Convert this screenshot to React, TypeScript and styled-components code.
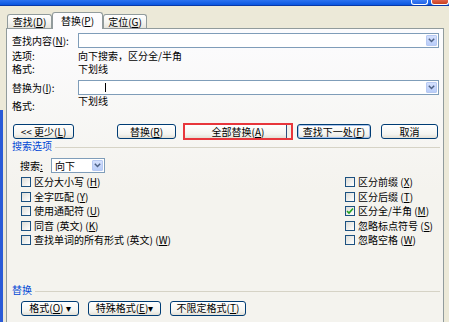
import React from 'react';
import styled, { createGlobalStyle } from 'styled-components';

const Global = createGlobalStyle`
  html, body { margin: 0; padding: 0; }
  body {
    width: 449px; height: 322px; overflow: hidden;
    background: #ECE9D8;
    font-family: "Noto Sans CJK SC", "Noto Sans", sans-serif;
    font-size: 10px; color: #000;
  }
  u { text-decoration: underline; text-underline-offset: 1px; }
`;

const Window = styled.div`
  width: 449px; height: 322px; overflow: hidden;
  display: flex; flex-direction: column;
  background:
    linear-gradient(to bottom, transparent 110px, #2A5BD7 110px) left top / 3px 100% no-repeat,
    #ECE9D8;
`;

const TitleBar = styled.div`
  height: 5px; flex: none;
  background: linear-gradient(#2C72F0, #0A56E0);
  border-bottom: 1px solid #0839A8;
  display: flex; justify-content: flex-end; gap: 3px;
`;

const TitleButton = styled.div<{ $close?: boolean }>`
  width: ${p => (p.$close ? 16 : 15)}px;
  border: 1px solid #fff; border-top: none;
  border-radius: 0 0 3px 3px;
  background: ${p => (p.$close ? 'linear-gradient(#E2624A, #C8401F)' : 'linear-gradient(#3E80F6, #2263E6)')};
`;

const TabRow = styled.div`
  height: 22px; flex: none;
  display: flex; align-items: flex-end;
  padding-left: 7px;
  position: relative; z-index: 1;
`;

const Tab = styled.div<{ $active?: boolean; $w: number }>`
  width: ${p => p.$w}px;
  height: ${p => (p.$active ? 17 : 14)}px;
  margin-bottom: ${p => (p.$active ? -1 : 0)}px;
  box-sizing: border-box;
  border: 1px solid #919B9C; border-bottom: none;
  border-radius: 3px 3px 0 0;
  background: ${p => (p.$active ? '#FCFCFE' : 'linear-gradient(#FFFFFF, #F3F3EF 60%, #E6E4DC)')};
  display: flex; align-items: center; justify-content: center;
  font-size: 10px; line-height: 12px;
  padding-top: ${p => (p.$active ? 0 : 1)}px;
`;

const Panel = styled.div`
  margin-left: 6px; width: 438px; flex: 1;
  box-sizing: border-box;
  border: 1px solid #919B9C; border-bottom: none;
  background: linear-gradient(#FCFCFE, #F4F3EE 160px);
  padding: 4px 0 0 5px;
  display: flex; flex-direction: column;
`;

const FieldRow = styled.div<{ $mt?: number }>`
  display: grid; grid-template-columns: 66px 361px;
  align-items: center; height: 15px;
  margin-top: ${p => p.$mt ?? 0}px;
`;

const Label = styled.span`
  line-height: 12px; white-space: nowrap;
`;

const InfoRow = styled.div<{ $h?: number; $mt?: number }>`
  display: grid; grid-template-columns: 66px 1fr;
  height: ${p => p.$h ?? 13}px;
  margin-top: ${p => p.$mt ?? 0}px;
  line-height: 13px; overflow: visible;
`;

const InfoText = styled.span`
  line-height: 13px; height: 13px;
`;

const BottomLabel = styled.span`
  align-self: end; line-height: 12px;
`;
const TopValue = styled.span`
  align-self: start; line-height: 12px;
`;

const Combo = styled.div<{ $w?: number }>`
  height: 15px; width: ${p => (p.$w ? p.$w + 'px' : 'auto')};
  box-sizing: border-box;
  border: 1px solid #7F9DB9; background: #fff;
  display: flex; align-items: center; justify-content: space-between;
  padding: 0 1px 0 3px;
`;

const ComboText = styled.span`
  line-height: 12px; display: flex; align-items: center;
`;

const Caret = styled.span`
  display: inline-block; width: 1px; height: 9px; background: #000; margin-left: 23px;
`;

const DropBtn = styled.div`
  width: 11px; height: 11px; box-sizing: border-box;
  border: 1px solid #B7C9F2; border-radius: 1px;
  background: linear-gradient(#D4E0FD, #B9CDF9);
  display: flex; align-items: center; justify-content: center;
`;

const ButtonRow = styled.div<{ $mt?: number; $pl?: number }>`
  display: flex; align-items: center;
  margin-top: ${p => p.$mt ?? 0}px;
  padding-left: ${p => p.$pl ?? 0}px;
`;

const Button = styled.div<{ $w: number; $ml?: number; $default?: boolean; $marked?: boolean }>`
  width: ${p => p.$w}px; height: ${p => (p.$marked ? 17 : 15)}px;
  margin-left: ${p => p.$ml ?? 0}px;
  box-sizing: border-box;
  border: ${p => (p.$marked ? '2px solid #E8363C' : '1px solid #003C74')};
  border-radius: ${p => (p.$marked ? 0 : 3)}px;
  background: linear-gradient(#FFFFFF, #F4F4F0 70%, #E3E0D6);
  box-shadow: ${p =>
    p.$default
      ? 'inset 0 0 0 1px #A9C4EE'
      : p.$marked
      ? 'inset -4px 0 0 #F1F0EA, inset -5px 0 0 #2D4C7C'
      : 'none'};
  display: flex; align-items: center; justify-content: center;
  font-size: 10px; line-height: 12px; white-space: nowrap;
`;

const SectionHead = styled.div<{ $mt?: number }>`
  display: flex; align-items: center; gap: 3px;
  margin-top: ${p => p.$mt ?? 0}px;
  height: 12px; margin-right: 3px;
`;

const SectionTitle = styled.span`
  color: #0046D5; line-height: 12px; white-space: nowrap;
`;

const SectionLine = styled.div`
  flex: 1; height: 1px; background: #D6D3C6; margin-top: 3px;
`;

const SearchRow = styled.div`
  display: flex; align-items: center; height: 15px;
  margin-top: 6px; padding-left: 8px;
`;

const SearchLabel = styled.span`
  width: 31px; line-height: 12px;
`;

const OptionGrid = styled.div`
  display: grid; grid-template-columns: 324px 1fr;
  margin-top: 2px; padding-left: 9px;
`;

const OptionCol = styled.div`
  display: flex; flex-direction: column;
`;

const Option = styled.div`
  height: 14.5px; display: flex; align-items: center; gap: 3px;
  white-space: nowrap; line-height: 12px;
`;

const Box = styled.span`
  width: 10px; height: 10px; box-sizing: border-box; flex: none;
  border: 1px solid #1C5180;
  background: linear-gradient(135deg, #DCDCD7, #FFFFFF);
  display: flex; align-items: center; justify-content: center;
`;

const Chevron = () => (
  <svg width="7" height="5" viewBox="0 0 7 5">
    <path d="M0.8 0.8 L3.5 3.5 L6.2 0.8" fill="none" stroke="#4D6185" strokeWidth="1.5" />
  </svg>
);

const Check = () => (
  <svg width="8" height="8" viewBox="0 0 8 8">
    <path d="M1 4 L3 6 L7 1.5" fill="none" stroke="#21A121" strokeWidth="1.6" />
  </svg>
);

type Opt = { text: string; key: string; checked?: boolean };

const leftOpts: Opt[] = [
  { text: '区分大小写 ', key: 'H' },
  { text: '全字匹配 ', key: 'Y' },
  { text: '使用通配符 ', key: 'U' },
  { text: '同音 (英文) ', key: 'K' },
  { text: '查找单词的所有形式 (英文) ', key: 'W' },
];
const rightOpts: Opt[] = [
  { text: '区分前缀 ', key: 'X' },
  { text: '区分后缀 ', key: 'T' },
  { text: '区分全/半角 ', key: 'M', checked: true },
  { text: '忽略标点符号 ', key: 'S' },
  { text: '忽略空格 ', key: 'W' },
];

const OptionItem = ({ o }: { o: Opt }) => (
  <Option>
    <Box>{o.checked && <Check />}</Box>
    <span>
      {o.text}(<u>{o.key}</u>)
    </span>
  </Option>
);

export default function App() {
  return (
    <Window>
      <Global />
      <TitleBar>
        <TitleButton />
        <TitleButton $close />
      </TitleBar>
      <TabRow>
        <Tab $w={45}>查找(<u>D</u>)</Tab>
        <Tab $w={51} $active>替换(<u>P</u>)</Tab>
        <Tab $w={44}>定位(<u>G</u>)</Tab>
      </TabRow>
      <Panel>
        <FieldRow>
          <Label>查找内容(<u>N</u>):</Label>
          <Combo>
            <ComboText />
            <DropBtn><Chevron /></DropBtn>
          </Combo>
        </FieldRow>
        <InfoRow $mt={1}>
          <InfoText>选项:</InfoText>
          <InfoText>向下搜索，区分全/半角</InfoText>
        </InfoRow>
        <InfoRow>
          <InfoText>格式:</InfoText>
          <InfoText>下划线</InfoText>
        </InfoRow>
        <FieldRow $mt={5}>
          <Label>替换为(<u>I</u>):</Label>
          <Combo>
            <ComboText><Caret /></ComboText>
            <DropBtn><Chevron /></DropBtn>
          </Combo>
        </FieldRow>
        <InfoRow $h={17}>
          <BottomLabel>格式:</BottomLabel>
          <TopValue>下划线</TopValue>
        </InfoRow>
        <ButtonRow $mt={11} $pl={1}>
          <Button $w={61}>&lt;&lt; 更少(<u>L</u>)</Button>
          <Button $w={59} $ml={43}>替换(<u>R</u>)</Button>
          <Button $w={110} $ml={7} $marked>全部替换(<u>A</u>)</Button>
          <Button $w={74} $ml={4} $default>查找下一处(<u>F</u>)</Button>
          <Button $w={57} $ml={10}>取消</Button>
        </ButtonRow>
        <SectionHead $mt={0}>
          <SectionTitle>搜索选项</SectionTitle>
          <SectionLine />
        </SectionHead>
        <SearchRow>
          <SearchLabel>搜索<u>:</u></SearchLabel>
          <Combo $w={54}>
            <ComboText>向下</ComboText>
            <DropBtn><Chevron /></DropBtn>
          </Combo>
        </SearchRow>
        <OptionGrid>
          <OptionCol>
            {leftOpts.map(o => <OptionItem key={o.text} o={o} />)}
          </OptionCol>
          <OptionCol>
            {rightOpts.map(o => <OptionItem key={o.text} o={o} />)}
          </OptionCol>
        </OptionGrid>
        <SectionHead $mt={36}>
          <SectionTitle>替换</SectionTitle>
          <SectionLine />
        </SectionHead>
        <ButtonRow $mt={5} $pl={9}>
          <Button $w={58}>格式(<u>O</u>) ▾</Button>
          <Button $w={73} $ml={9}>特殊格式(<u>E</u>)▾</Button>
          <Button $w={76} $ml={9}>不限定格式(<u>T</u>)</Button>
        </ButtonRow>
      </Panel>
    </Window>
  );
}
